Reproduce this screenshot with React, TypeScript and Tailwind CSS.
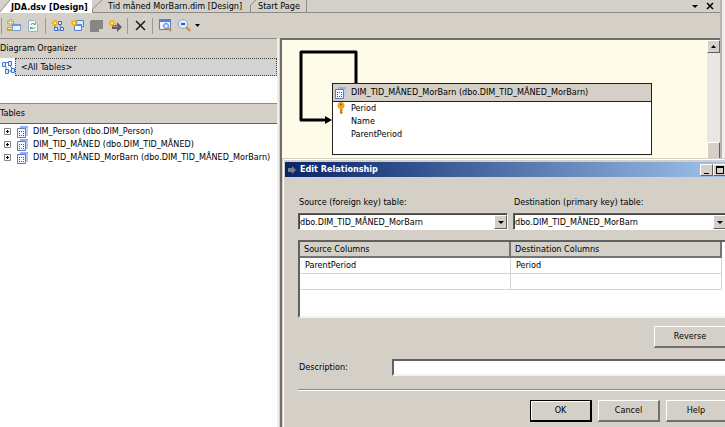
import React from 'react';

const raised = 'border border-t-white border-l-white border-r-[#606060] border-b-[#606060] bg-[#d4d0c8]';

const TableIcon: React.FC = () => (
  <svg width="12" height="12" viewBox="0 0 12 12" className="shrink-0">
    <path d="M3 0h8v10H3z" fill="#b4cdf8" />
    <path d="M3 0h8v2H3z" fill="#8fb3f2" />
    <path d="M.5 2.5h8v9h-8z" fill="#f6f9ff" stroke="#5f7db3" />
    <path d="M2 5h1v1H2zm2 0h1v1H4zm2 0h1v1H6zM2 7h1v1H2zm2 2h1v1H4zm2-2h1v1H6zM2 9h1v1H2zm4 0h1v1H6z" fill="#37558c" />
  </svg>
);

const PlusBox: React.FC = () => (
  <svg width="7" height="7" viewBox="0 0 7 7" className="shrink-0">
    <path d="M.5.5h6v6h-6z" fill="#fff" stroke="#848484" />
    <path d="M2 3.5h3M3.5 2v3" stroke="#000" />
  </svg>
);

const DiagramIcon: React.FC = () => (
  <svg width="13" height="14" viewBox="0 0 13 14" className="shrink-0">
    <path d="M3 3l5-1M3 5l2 6M8 5l2 4M6 11h3" fill="none" stroke="#3c6fc9" />
    <path d="M.5 2.500h3v4h-3zM6.500 1.500h3v4h-3zM3.500 9.500h3v4h-3zM9.500 8.500h3v4h-3z" fill="#dce9ff" stroke="#3f74d2" />
  </svg>
);

const Star: React.FC = () => (
  <>
    <path d="M4 0l1 2 2-1-1 2 2 1-2 1 1 2-2-1-1 2-1-2-2 1 1-2-2-1 2-1-1-2 2 1z" fill="#f5b400" />
    <path d="M3 3h2v2H3z" fill="#ffe680" />
  </>
);

const AddTableIcon: React.FC = () => (
  <svg width="14" height="13" viewBox="0 0 14 13">
    <path d="M2 0h3v2h2v3H5v2H2V5H0V2h2z" fill="#d9ab2c" />
    <path d="M3.500 1v5M1 3.500h5" stroke="#fff0a0" />
    <path d="M0 8h5v4H0z" fill="#d0a42c" />
    <path d="M1 9.500h4" stroke="#fff0a0" />
    <path d="M5.500 5.500h8v6h-8z" fill="#eef4ff" stroke="#7b9bd0" />
    <path d="M5 5h9v2H5z" fill="#6f97dd" />
  </svg>
);

const RefreshIcon: React.FC = () => (
  <svg width="10" height="12" viewBox="0 0 10 12">
    <path d="M.5.500h6l3 3v8h-9z" fill="#f5f9ff" stroke="#9aaecb" />
    <path d="M3 5c0-2 3-2 4-.5M7 7c0 2-3 2-4 .5" fill="none" stroke="#5db063" />
    <path d="M5 5h3V2zM5 7H2v3z" fill="#5db063" />
  </svg>
);

const NewDiagramIcon: React.FC = () => (
  <svg width="14" height="13" viewBox="0 0 14 13">
    <path d="M4 5v6h6M7 4l4 5" fill="none" stroke="#3c6fc9" />
    <path d="M7.500 2.500h3v3h-3zM3.500 8.500h3v3h-3zM9.500 8.500h3v3h-3z" fill="#dce9ff" stroke="#3c6fc9" />
    <Star />
  </svg>
);

const NewQueryIcon: React.FC = () => (
  <svg width="14" height="13" viewBox="0 0 14 13">
    <path d="M6.500 1.500h7v6h-7z" fill="#dce9ff" stroke="#4f7fd6" />
    <path d="M4.500 5.500h7v6h-7z" fill="#f3f7ff" stroke="#4f7fd6" />
    <path d="M4 5h8v2H4z" fill="#5e8ce0" />
    <Star />
  </svg>
);

const DisabledIcon: React.FC = () => (
  <svg width="13" height="12" viewBox="0 0 13 12">
    <path d="M1 0h12v9H9v3H0V1h1z" fill="#868686" />
  </svg>
);

const NewRelationIcon: React.FC = () => (
  <svg width="14" height="13" viewBox="0 0 14 13">
    <path d="M4 6h5V3l5 5-5 5v-3H4z" fill="#5e5e5e" />
    <path d="M5 7.500h5" stroke="#9a9a9a" />
    <Star />
  </svg>
);

const DeleteIcon: React.FC = () => (
  <svg width="11" height="11" viewBox="0 0 11 11">
    <path d="M1 1l9 9M10 1l-9 9" stroke="#1a1a1a" strokeWidth="1.500" />
  </svg>
);

const FindTableIcon: React.FC = () => (
  <svg width="13" height="13" viewBox="0 0 13 13">
    <path d="M.5.500h11v10H.5z" fill="#eaf2ff" stroke="#4f7fd6" />
    <path d="M0 0h12v3H0z" fill="#4f7fd6" />
    <path d="M9 9l3 3" stroke="#c98b3a" strokeWidth="2" />
    <circle cx="7" cy="7" r="2.500" fill="#cfe2ff" stroke="#5d7fae" />
  </svg>
);

const ZoomIcon: React.FC = () => (
  <svg width="13" height="13" viewBox="0 0 13 13">
    <path d="M8 8l4 4" stroke="#c98b3a" strokeWidth="2" />
    <circle cx="5" cy="5" r="4.500" fill="#e4efff" stroke="#8ba6cf" />
    <path d="M3 5h4" stroke="#2c5cab" strokeWidth="2" />
  </svg>
);

const DownArrow: React.FC = () => (
  <svg width="6" height="3" viewBox="0 0 6 3">
    <path d="M0 0h6L3 3z" fill="#000" />
  </svg>
);

const KeyIcon: React.FC = () => (
  <svg width="8" height="12" viewBox="0 0 8 12">
    <path d="M4 6v5l1.500-1M4 8h1.500" fill="none" stroke="#c9871a" strokeWidth="2" />
    <circle cx="4" cy="3.500" r="3.500" fill="#eda71f" />
    <circle cx="4" cy="2.500" r="1" fill="#8a5a0a" />
  </svg>
);

const Separator: React.FC = () => <div className="h-4 w-px bg-[#9c988f]" />;

const Tool: React.FC<{ label: string; children: React.ReactNode }> = ({ label, children }) => (
  <button aria-label={label} className="flex h-4 w-4 items-center justify-center">
    {children}
  </button>
);

const tables = [
  'DIM_Person (dbo.DIM_Person)',
  'DIM_TID_MÅNED (dbo.DIM_TID_MÅNED)',
  'DIM_TID_MÅNED_MorBarn (dbo.DIM_TID_MÅNED_MorBarn)',
];

const Tabs: React.FC = () => (
  <div className="flex h-[13px] shrink-0 whitespace-nowrap border-b border-[#8e8b85] leading-[12px]">
    <button className="relative h-[13px] w-[92px] shrink-0 bg-white pl-[11px] text-left font-bold">
      <svg width="10" height="13" viewBox="0 0 10 13" className="absolute left-0 top-0">
        <path d="M0 0h10L0 12z" fill="#d4d0c8" />
        <path d="M0 12L10 0" stroke="#8e8b85" />
      </svg>
      JDA.dsv [Design]
    </button>
    <button className="relative w-[158px] shrink-0 pl-4 text-left">
      <svg width="12" height="12" viewBox="0 0 12 12" className="absolute left-0 top-0">
        <path d="M.5 12V9L10 0" fill="none" stroke="#8e8b85" />
      </svg>
      Tid måned MorBarn.dim [Design]
    </button>
    <button className="relative w-[57px] shrink-0 border-r border-[#8e8b85] pl-2 text-left">
      <svg width="8" height="12" viewBox="0 0 8 12" className="absolute left-0 top-0">
        <path d="M.5 12V5L6 0" fill="none" stroke="#8e8b85" />
      </svg>
      Start Page
    </button>
    <div className="ml-auto flex items-center gap-2 pr-[6px]">
      <button aria-label="Active files">
        <DownArrow />
      </button>
      <button aria-label="Close">
        <svg width="8" height="8" viewBox="0 0 8 8">
          <path d="M1 1l6 6M7 1L1 7" stroke="#000" strokeWidth="1.500" />
        </svg>
      </button>
    </div>
  </div>
);

const Toolbar: React.FC = () => (
  <div className="flex h-[25px] shrink-0 items-center gap-[2px] pl-px">
    <Separator />
    <div className="flex gap-[3px] px-[2px]">
      <Tool label="Add table"><AddTableIcon /></Tool>
      <Tool label="Refresh"><RefreshIcon /></Tool>
    </div>
    <Separator />
    <div className="flex gap-[3px] px-[2px]">
      <Tool label="New diagram"><NewDiagramIcon /></Tool>
      <Tool label="New named query"><NewQueryIcon /></Tool>
      <Tool label="Edit named query"><DisabledIcon /></Tool>
      <Tool label="New relationship"><NewRelationIcon /></Tool>
    </div>
    <Separator />
    <div className="px-[2px]">
      <Tool label="Delete"><DeleteIcon /></Tool>
    </div>
    <Separator />
    <div className="flex items-center gap-[3px] pl-[2px]">
      <Tool label="Find table"><FindTableIcon /></Tool>
      <Tool label="Zoom"><ZoomIcon /></Tool>
      <button aria-label="Zoom levels">
        <svg width="5" height="3" viewBox="0 0 5 3"><path d="M0 0h5L2.500 3z" /></svg>
      </button>
    </div>
  </div>
);

const Sidebar: React.FC = () => (
  <aside className="flex w-[277px] shrink-0 flex-col border-t border-[#8e8b85] bg-white">
    <h2 className="h-[19px] bg-[#d4d0c8] leading-[19px]">Diagram Organizer</h2>
    <div className="flex h-[46px] items-start border-b border-[#8e8b85]">
      <button className="flex h-[18px] w-full items-center pl-[2px] text-left">
        <DiagramIcon />
        <span className="h-full flex-1 border border-dotted border-[#404040] bg-[#d4d4d4] pl-[5px] leading-[17px]">
          &lt;All Tables&gt;
        </span>
      </button>
    </div>
    <h2 className="h-[20px] border-b border-[#606060] bg-[#d4d0c8] leading-[19px]">Tables</h2>
    <ul className="pt-px">
      {tables.map((name) => (
        <li key={name} className="flex h-[13px] items-center pl-1 whitespace-nowrap">
          <PlusBox />
          <span className="flex pl-[6px] pr-1">
            <TableIcon />
          </span>
          {name}
        </li>
      ))}
    </ul>
  </aside>
);

const Diagram: React.FC = () => (
  <main className="relative flex min-w-0 flex-1 border-l-2 border-t-2 border-[#706e6a] bg-[#fefbe8]">
    <div className="relative min-w-0 flex-1">
      <svg width="60" height="90" viewBox="0 0 60 90" className="absolute left-[16px] top-[8px]">
        <path d="M58 36V4H3v68h25" fill="none" stroke="#000" strokeWidth="3" strokeLinejoin="round" />
        <path d="M27 68l7 4-7 4z" fill="#000" />
      </svg>
      <section className="absolute left-[50px] top-[43px] h-[72px] w-[320px] border border-[#202020] bg-white">
        <h3 className="flex h-[18px] items-center gap-1 border-b border-[#202020] bg-[#d4d0c8] pl-[2px]">
          <TableIcon />
          DIM_TID_MÅNED_MorBarn (dbo.DIM_TID_MÅNED_MorBarn)
        </h3>
        <ul className="pl-[18px] leading-[13px]">
          <li className="relative">
            <span className="absolute left-[-14px] top-0">
              <KeyIcon />
            </span>
            Period
          </li>
          <li>Name</li>
          <li>ParentPeriod</li>
        </ul>
      </section>
    </div>
    <div className="flex w-[13px] shrink-0 flex-col bg-[#e9e6e4]">
      <button aria-label="Scroll up" className={`flex h-[13px] items-center justify-center ${raised}`}>
        <svg width="5" height="3" viewBox="0 0 5 3"><path d="M0 3h5L2.500 0z" /></svg>
      </button>
      <div className={`mt-[89px] h-10 ${raised}`} />
    </div>
  </main>
);

const TableSelect: React.FC<{ id: string; label: string }> = ({ id, label }) => (
  <div>
    <label htmlFor={id} className="block pl-px leading-[14px]">{label}</label>
    <div className="relative mt-1 border border-t-[#606060] border-l-[#606060] border-r-white border-b-white">
      <select id={id} className="block h-[15px] w-full appearance-none border-l border-t border-[#404040] bg-white leading-[14px]">
        <option>dbo.DIM_TID_MÅNED_MorBarn</option>
      </select>
      <span className={`pointer-events-none absolute bottom-0 right-0 top-px flex w-[13px] items-center justify-center ${raised}`}>
        <DownArrow />
      </span>
    </div>
  </div>
);

const sunken = 'border-2 border-t-[#606060] border-l-[#606060] border-r-[#f4f2ee] border-b-[#f4f2ee] bg-white';
const dialogButton = 'h-[22px] border-b-2 border-r-2 border-l border-t border-t-white border-l-white border-r-[#706e6a] border-b-[#706e6a] bg-[#d4d0c8]';
const cell = 'border-b border-r border-[#d8d4cb] pl-[5px] font-normal';
const headCell = 'border-b-2 border-r-2 border-[#77746f] bg-[#d4d0c8] pl-1 text-left font-normal';

const EditRelationship: React.FC = () => (
  <div role="dialog" aria-label="Edit Relationship" className="absolute bottom-0 left-[282px] right-[-18px] top-[158px] border-l border-t border-[#d4d0c8] bg-[#d4d0c8]">
    <div className="h-full border-l border-t border-white pl-px pt-[2px]">
      <div className="flex h-[15px] items-center bg-linear-to-r from-[#0a246a] to-[#a6caf0] pl-[3px] text-white">
        <svg width="8" height="8" viewBox="0 0 8 8">
          <path d="M0 2h4V0l4 4-4 4V6H0z" fill="#777d85" />
        </svg>
        <h1 className="pl-1 font-bold">Edit Relationship</h1>
        <div className="ml-auto flex pr-[2px] text-black">
          <button aria-label="Minimize" className={`flex h-3 w-[13px] items-end pb-px pl-[3px] ${raised}`}>
            <span className="h-px w-[5px] bg-black" />
          </button>
          <button aria-label="Maximize" className={`flex h-3 w-[13px] items-center justify-center ${raised}`}>
            <span className="h-2 w-2 border border-t-2 border-black" />
          </button>
          <button aria-label="Close dialog" className={`ml-[2px] flex h-3 w-[13px] items-center justify-center ${raised}`}>
            <svg width="7" height="7" viewBox="0 0 7 7">
              <path d="M1 1l5 5M6 1L1 6" stroke="#000" />
            </svg>
          </button>
        </div>
      </div>

      <form className="pl-[13px] pr-4 pt-[18px]">
        <div className="grid grid-cols-[210px_1fr] gap-[5px]">
          <TableSelect id="source" label="Source (foreign key) table:" />
          <TableSelect id="destination" label="Destination (primary key) table:" />
        </div>

        <div className={`mt-[10px] h-[78px] pr-[3px] ${sunken}`}>
          <table className="w-full table-fixed border-separate border-spacing-0">
            <thead>
              <tr className="h-4">
                <th className={headCell}>Source Columns</th>
                <th className={headCell}>Destination Columns</th>
              </tr>
            </thead>
            <tbody>
              <tr className="h-4">
                <td className={cell}>ParentPeriod</td>
                <td className={cell}>Period</td>
              </tr>
              <tr className="h-4">
                <td className={cell} />
                <td className={cell} />
              </tr>
            </tbody>
          </table>
        </div>

        <div className="mt-2 flex justify-end">
          <button type="button" className={`w-[73px] ${dialogButton}`}>Reverse</button>
        </div>

        <div className="mt-[11px] flex h-[17px] items-center">
          <label htmlFor="description" className="w-[94px] pl-px">Description:</label>
          <input id="description" type="text" className={`h-full min-w-0 flex-1 ${sunken}`} />
        </div>

        <div className="mt-[13px] h-[2px] border-b border-t border-b-white border-t-[#8e8b85]" />

        <div className="mt-[9px] flex justify-end gap-[6px]">
          <button type="button" className="h-[22px] w-[62px] border border-b-2 border-r-2 border-black bg-[#d4d0c8] shadow-[inset_1px_1px_0_#fff]">OK</button>
          <button type="button" className={`w-[62px] ${dialogButton}`}>Cancel</button>
          <button type="button" className={`w-[61px] ${dialogButton}`}>Help</button>
        </div>
      </form>
    </div>
  </div>
);

const App: React.FC = () => {
  return (
    <div className="relative flex h-screen overflow-hidden bg-[#d4d0c8] font-['DejaVu_Sans_Condensed','DejaVu_Sans',sans-serif] text-[9px] leading-[13px] text-black">
      <div className="flex min-w-0 flex-1 flex-col">
        <Tabs />
        <Toolbar />
        <div className="flex min-h-0 flex-1">
          <Sidebar />
          <div className="w-[3px] shrink-0 border-l-2 border-[#f0eeea]" />
          <Diagram />
        </div>
      </div>
      <div className="w-[5px] shrink-0 border-l-2 border-[#b8b5ae] bg-[#f0eeea]" />
      <EditRelationship />
    </div>
  );
};

export default App;
